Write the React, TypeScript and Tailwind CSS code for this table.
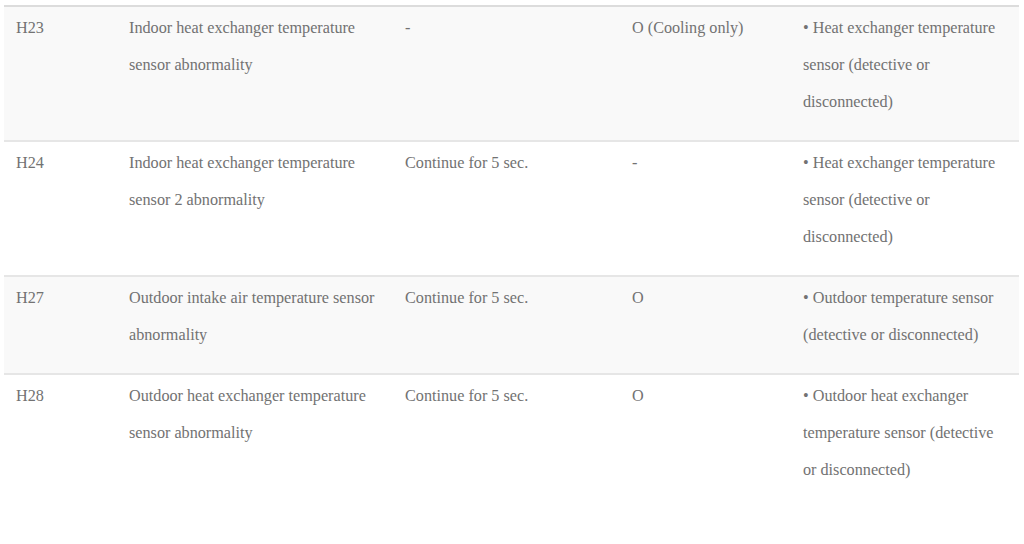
import React from 'react';

type Row = {
  code: string;
  name: string;
  condition: string;
  check: string;
  cause: string;
};

const rows: Row[] = [
  {
    code: 'H23',
    name: 'Indoor heat exchanger temperature sensor abnormality',
    condition: '-',
    check: 'O (Cooling only)',
    cause: '• Heat exchanger temperature sensor (detective or disconnected)',
  },
  {
    code: 'H24',
    name: 'Indoor heat exchanger temperature sensor 2 abnormality',
    condition: 'Continue for 5 sec.',
    check: '-',
    cause: '• Heat exchanger temperature sensor (detective or disconnected)',
  },
  {
    code: 'H27',
    name: 'Outdoor intake air temperature sensor abnormality',
    condition: 'Continue for 5 sec.',
    check: 'O',
    cause: '• Outdoor temperature sensor (detective or disconnected)',
  },
  {
    code: 'H28',
    name: 'Outdoor heat exchanger temperature sensor abnormality',
    condition: 'Continue for 5 sec.',
    check: 'O',
    cause: '• Outdoor heat exchanger temperature sensor (detective or disconnected)',
  },
];

export default function App() {
  return (
    <div className="w-[1024px] h-[544px] bg-white pt-[5px] pl-[4px] pr-[5px] font-['Liberation_Serif',serif] text-[16.2px] leading-[37px] text-[#727272]">
      <div className="border-t-2 border-[#dcdcdc]">
        {rows.map((row, i) => (
          <div
            key={row.code}
            className={`grid grid-cols-[114px_276px_227px_171px_227px] pt-[3px] pb-[19px] ${
              i % 2 === 0 ? 'bg-[#f9f9f9]' : 'bg-white'
            } ${i < rows.length - 1 ? 'border-b-2 border-[#e6e6e6]' : ''}`}
          >
            <div className="pl-[12px] pr-[10px]">{row.code}</div>
            <div className="pl-[11px] pr-[8px]">{row.name}</div>
            <div className="pl-[11px] pr-[10px]">{row.condition}</div>
            <div className="pl-[11px] pr-[10px]">{row.check}</div>
            <div className="pl-[11px] pr-[10px]">{row.cause}</div>
          </div>
        ))}
      </div>
    </div>
  );
}
